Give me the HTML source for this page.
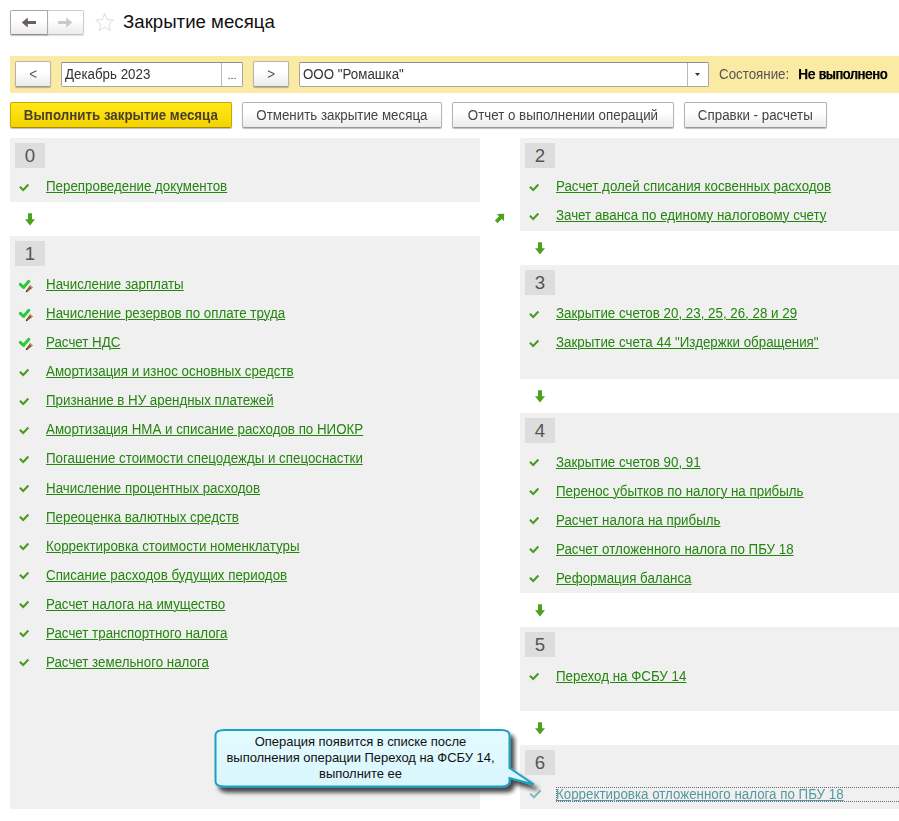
<!DOCTYPE html>
<html><head><meta charset="utf-8"><title>Закрытие месяца</title>
<style>
html,body{margin:0;padding:0;background:#fff;}
body{width:899px;height:821px;position:relative;overflow:hidden;font-family:"Liberation Sans",sans-serif;font-size:13.33px;color:#333;}
.abs,.pn,.nm,.ck,.lk,.btn,.inp{position:absolute;box-sizing:border-box;}
.pn{background:#f0f0f0;}
.nm{width:30px;height:25px;background:#dddddd;color:#555;font-size:18.67px;line-height:26px;text-align:center;}
.lk{color:#24850f;text-decoration:underline;text-decoration-thickness:1px;text-underline-offset:1px;white-space:nowrap;line-height:16px;height:16px;font-size:14px;transform:scaleX(0.9524);transform-origin:0 0;}
.t{display:inline-block;font-size:14px;transform:scaleX(0.9524);transform-origin:0 50%;white-space:nowrap;}
.t.c{transform-origin:50% 50%;}
.btn{height:26px;border:1px solid #b4b4b4;border-bottom-color:#9a9a9a;border-radius:2px;background:linear-gradient(#ffffff 40%,#ebebeb);box-shadow:0 1px 1px rgba(0,0,0,.25);color:#444;text-align:center;line-height:25px;white-space:nowrap;}
.inp{height:25px;border:1px solid #a6a6a6;border-top-color:#8e8e8e;border-radius:2px;background:#fff;color:#333;line-height:23px;padding-left:3px;white-space:nowrap;}
</style></head><body>
<!-- header -->
<div class="btn" style="left:47px;top:10px;width:37px;height:25px;border-color:#cdcdcd;border-bottom-color:#c0c0c0;border-radius:0 2px 2px 0;box-shadow:0 1px 1px rgba(0,0,0,.12)"></div>
<div class="btn" style="left:10px;top:10px;width:38px;height:25px;border-color:#a9a9a9;border-bottom-color:#8f8f8f;border-radius:2px 0 0 2px;"></div>
<svg class="abs" style="left:21px;top:17px" width="16" height="11" viewBox="0 0 16 11"><path d="M0.8 5.5 L6.8 0.6 V4.1 H15 V6.9 H6.8 V10.4 Z" fill="#6a5f5f"/></svg>
<svg class="abs" style="left:57px;top:17px" width="16" height="11" viewBox="0 0 16 11"><path d="M15.2 5.5 L9.2 0.6 V4.1 H1 V6.9 H9.2 V10.4 Z" fill="#c9c9c9"/></svg>
<svg class="abs" style="left:95px;top:12px" width="20" height="20" viewBox="0 0 20 20"><path d="M9.7 1.6 L12.2 7.6 L18.6 8.1 L13.7 12.3 L15.2 18.6 L9.7 15.2 L4.2 18.6 L5.7 12.3 L0.8 8.1 L7.2 7.6 Z" fill="#fff" stroke="#dcdcdc" stroke-width="1"/></svg>
<div class="abs" style="left:123px;top:10px;font-size:18.67px;line-height:23px;color:#111;white-space:nowrap">Закрытие месяца</div>
<!-- yellow band -->
<div class="abs" style="left:10px;top:56px;width:889px;height:37px;background:#fbeaa3"></div>
<div class="btn" style="left:15px;top:61px;width:36px;height:26px;line-height:24px;color:#555"><span class="t c">&lt;</span></div>
<div class="inp" style="left:61px;top:62px;width:182px;"><span class="t">Декабрь 2023</span></div>
<div class="abs" style="left:221px;top:63px;width:1px;height:23px;background:#b8b8b8"></div>
<div class="abs" style="left:222px;top:64px;width:20px;height:22px;line-height:22px;text-align:center;font-size:11px;color:#333">...</div>
<div class="btn" style="left:253px;top:61px;width:36px;height:26px;line-height:24px;color:#555"><span class="t c">&gt;</span></div>
<div class="inp" style="left:299px;top:62px;width:410px;"><span class="t">ООО "Ромашка"</span></div>
<div class="abs" style="left:687px;top:63px;width:1px;height:23px;background:#b8b8b8"></div>
<svg class="abs" style="left:695px;top:73px" width="5" height="3" viewBox="0 0 5 3"><path d="M0 0 H5 L2.5 3 Z" fill="#333"/></svg>
<div class="abs" style="left:719px;top:66px;line-height:16px;color:#555;white-space:nowrap"><span class="t">Состояние:</span></div>
<div class="abs" style="left:798px;top:66px;line-height:16px;color:#000;white-space:nowrap;"><span class="t" style="text-shadow:0.75px 0 0 #000;-webkit-text-stroke:0.25px #000">Не выполнено</span></div>
<!-- command bar -->
<div class="btn" style="left:10px;top:102px;width:222px;background:linear-gradient(#ffe818,#f3d400);border-color:#c7a900;border-bottom-color:#a88f00;color:#4a4025;font-weight:bold;"><span class="t c">Выполнить закрытие месяца</span></div>
<div class="btn" style="left:242px;top:102px;width:200px;"><span class="t c">Отменить закрытие месяца</span></div>
<div class="btn" style="left:452px;top:102px;width:222px;"><span class="t c">Отчет о выполнении операций</span></div>
<div class="btn" style="left:684px;top:102px;width:143px;"><span class="t c">Справки - расчеты</span></div>
<!-- panels -->
<div class="pn" style="left:10px;top:138px;width:470px;height:64px"></div>
<div class="nm" style="left:15px;top:143px">0</div>
<svg class="ck" style="left:18px;top:183px" width="12" height="10" viewBox="0 0 12 10"><path d="M1.9 3.7 L5.2 6.9 L10.4 1.6" fill="none" stroke="#4a9a1e" stroke-width="2.1" stroke-linecap="butt" stroke-linejoin="miter"/></svg>
<a class="lk" style="left:46px;top:178px">Перепроведение документов</a>
<div class="pn" style="left:10px;top:236px;width:470px;height:573px"></div>
<div class="nm" style="left:15px;top:241px">1</div>
<svg class="ck" style="left:18px;top:278px" width="17" height="15" viewBox="0 0 17 15"><path d="M2.3 6.4 L5.6 9.4 L10.8 3.3" fill="none" stroke="#28b834" stroke-width="2.9" stroke-linecap="round" stroke-linejoin="round"/><path d="M2.3 6.3 L5.6 9.3 L10.8 3.2" fill="none" stroke="#1fdc30" stroke-width="1.5" stroke-linecap="round" stroke-linejoin="round"/><path d="M12.2 7.0 L14.9 9.4 L9.7 13.5 L7.8 14.2 L8.4 12.2 Z" fill="#8a573a"/><path d="M12.2 7.0 L14.9 9.4 L13.9 10.2 L11.4 8.0 Z" fill="#d2a071"/><path d="M8.4 12.2 L9.7 13.5 L7.8 14.2 Z" fill="#3f261b"/></svg>
<a class="lk" style="left:46px;top:276px">Начисление зарплаты</a>
<svg class="ck" style="left:18px;top:307px" width="17" height="15" viewBox="0 0 17 15"><path d="M2.3 6.4 L5.6 9.4 L10.8 3.3" fill="none" stroke="#28b834" stroke-width="2.9" stroke-linecap="round" stroke-linejoin="round"/><path d="M2.3 6.3 L5.6 9.3 L10.8 3.2" fill="none" stroke="#1fdc30" stroke-width="1.5" stroke-linecap="round" stroke-linejoin="round"/><path d="M12.2 7.0 L14.9 9.4 L9.7 13.5 L7.8 14.2 L8.4 12.2 Z" fill="#8a573a"/><path d="M12.2 7.0 L14.9 9.4 L13.9 10.2 L11.4 8.0 Z" fill="#d2a071"/><path d="M8.4 12.2 L9.7 13.5 L7.8 14.2 Z" fill="#3f261b"/></svg>
<a class="lk" style="left:46px;top:305px">Начисление резервов по оплате труда</a>
<svg class="ck" style="left:18px;top:336px" width="17" height="15" viewBox="0 0 17 15"><path d="M2.3 6.4 L5.6 9.4 L10.8 3.3" fill="none" stroke="#28b834" stroke-width="2.9" stroke-linecap="round" stroke-linejoin="round"/><path d="M2.3 6.3 L5.6 9.3 L10.8 3.2" fill="none" stroke="#1fdc30" stroke-width="1.5" stroke-linecap="round" stroke-linejoin="round"/><path d="M12.2 7.0 L14.9 9.4 L9.7 13.5 L7.8 14.2 L8.4 12.2 Z" fill="#8a573a"/><path d="M12.2 7.0 L14.9 9.4 L13.9 10.2 L11.4 8.0 Z" fill="#d2a071"/><path d="M8.4 12.2 L9.7 13.5 L7.8 14.2 Z" fill="#3f261b"/></svg>
<a class="lk" style="left:46px;top:334px">Расчет НДС</a>
<svg class="ck" style="left:18px;top:368px" width="12" height="10" viewBox="0 0 12 10"><path d="M1.9 3.7 L5.2 6.9 L10.4 1.6" fill="none" stroke="#4a9a1e" stroke-width="2.1" stroke-linecap="butt" stroke-linejoin="miter"/></svg>
<a class="lk" style="left:46px;top:363px">Амортизация и износ основных средств</a>
<svg class="ck" style="left:18px;top:397px" width="12" height="10" viewBox="0 0 12 10"><path d="M1.9 3.7 L5.2 6.9 L10.4 1.6" fill="none" stroke="#4a9a1e" stroke-width="2.1" stroke-linecap="butt" stroke-linejoin="miter"/></svg>
<a class="lk" style="left:46px;top:392px">Признание в НУ арендных платежей</a>
<svg class="ck" style="left:18px;top:426px" width="12" height="10" viewBox="0 0 12 10"><path d="M1.9 3.7 L5.2 6.9 L10.4 1.6" fill="none" stroke="#4a9a1e" stroke-width="2.1" stroke-linecap="butt" stroke-linejoin="miter"/></svg>
<a class="lk" style="left:46px;top:421px">Амортизация НМА и списание расходов по НИОКР</a>
<svg class="ck" style="left:18px;top:455px" width="12" height="10" viewBox="0 0 12 10"><path d="M1.9 3.7 L5.2 6.9 L10.4 1.6" fill="none" stroke="#4a9a1e" stroke-width="2.1" stroke-linecap="butt" stroke-linejoin="miter"/></svg>
<a class="lk" style="left:46px;top:450px">Погашение стоимости спецодежды и спецоснастки</a>
<svg class="ck" style="left:18px;top:484px" width="12" height="10" viewBox="0 0 12 10"><path d="M1.9 3.7 L5.2 6.9 L10.4 1.6" fill="none" stroke="#4a9a1e" stroke-width="2.1" stroke-linecap="butt" stroke-linejoin="miter"/></svg>
<a class="lk" style="left:46px;top:480px">Начисление процентных расходов</a>
<svg class="ck" style="left:18px;top:513px" width="12" height="10" viewBox="0 0 12 10"><path d="M1.9 3.7 L5.2 6.9 L10.4 1.6" fill="none" stroke="#4a9a1e" stroke-width="2.1" stroke-linecap="butt" stroke-linejoin="miter"/></svg>
<a class="lk" style="left:46px;top:509px">Переоценка валютных средств</a>
<svg class="ck" style="left:18px;top:542px" width="12" height="10" viewBox="0 0 12 10"><path d="M1.9 3.7 L5.2 6.9 L10.4 1.6" fill="none" stroke="#4a9a1e" stroke-width="2.1" stroke-linecap="butt" stroke-linejoin="miter"/></svg>
<a class="lk" style="left:46px;top:538px">Корректировка стоимости номенклатуры</a>
<svg class="ck" style="left:18px;top:571px" width="12" height="10" viewBox="0 0 12 10"><path d="M1.9 3.7 L5.2 6.9 L10.4 1.6" fill="none" stroke="#4a9a1e" stroke-width="2.1" stroke-linecap="butt" stroke-linejoin="miter"/></svg>
<a class="lk" style="left:46px;top:567px">Списание расходов будущих периодов</a>
<svg class="ck" style="left:18px;top:600px" width="12" height="10" viewBox="0 0 12 10"><path d="M1.9 3.7 L5.2 6.9 L10.4 1.6" fill="none" stroke="#4a9a1e" stroke-width="2.1" stroke-linecap="butt" stroke-linejoin="miter"/></svg>
<a class="lk" style="left:46px;top:596px">Расчет налога на имущество</a>
<svg class="ck" style="left:18px;top:629px" width="12" height="10" viewBox="0 0 12 10"><path d="M1.9 3.7 L5.2 6.9 L10.4 1.6" fill="none" stroke="#4a9a1e" stroke-width="2.1" stroke-linecap="butt" stroke-linejoin="miter"/></svg>
<a class="lk" style="left:46px;top:625px">Расчет транспортного налога</a>
<svg class="ck" style="left:18px;top:658px" width="12" height="10" viewBox="0 0 12 10"><path d="M1.9 3.7 L5.2 6.9 L10.4 1.6" fill="none" stroke="#4a9a1e" stroke-width="2.1" stroke-linecap="butt" stroke-linejoin="miter"/></svg>
<a class="lk" style="left:46px;top:654px">Расчет земельного налога</a>
<div class="pn" style="left:520px;top:138px;width:379px;height:93px"></div>
<div class="nm" style="left:525px;top:143px">2</div>
<svg class="ck" style="left:528px;top:183px" width="12" height="10" viewBox="0 0 12 10"><path d="M1.9 3.7 L5.2 6.9 L10.4 1.6" fill="none" stroke="#4a9a1e" stroke-width="2.1" stroke-linecap="butt" stroke-linejoin="miter"/></svg>
<a class="lk" style="left:556px;top:178px">Расчет долей списания косвенных расходов</a>
<svg class="ck" style="left:528px;top:212px" width="12" height="10" viewBox="0 0 12 10"><path d="M1.9 3.7 L5.2 6.9 L10.4 1.6" fill="none" stroke="#4a9a1e" stroke-width="2.1" stroke-linecap="butt" stroke-linejoin="miter"/></svg>
<a class="lk" style="left:556px;top:207px">Зачет аванса по единому налоговому счету</a>
<div class="pn" style="left:520px;top:265px;width:379px;height:114px"></div>
<div class="nm" style="left:525px;top:270px">3</div>
<svg class="ck" style="left:528px;top:310px" width="12" height="10" viewBox="0 0 12 10"><path d="M1.9 3.7 L5.2 6.9 L10.4 1.6" fill="none" stroke="#4a9a1e" stroke-width="2.1" stroke-linecap="butt" stroke-linejoin="miter"/></svg>
<a class="lk" style="left:556px;top:305px">Закрытие счетов 20, 23, 25, 26, 28 и 29</a>
<svg class="ck" style="left:528px;top:339px" width="12" height="10" viewBox="0 0 12 10"><path d="M1.9 3.7 L5.2 6.9 L10.4 1.6" fill="none" stroke="#4a9a1e" stroke-width="2.1" stroke-linecap="butt" stroke-linejoin="miter"/></svg>
<a class="lk" style="left:556px;top:334px">Закрытие счета 44 "Издержки обращения"</a>
<div class="pn" style="left:520px;top:413px;width:379px;height:180px"></div>
<div class="nm" style="left:525px;top:418px">4</div>
<svg class="ck" style="left:528px;top:458px" width="12" height="10" viewBox="0 0 12 10"><path d="M1.9 3.7 L5.2 6.9 L10.4 1.6" fill="none" stroke="#4a9a1e" stroke-width="2.1" stroke-linecap="butt" stroke-linejoin="miter"/></svg>
<a class="lk" style="left:556px;top:454px">Закрытие счетов 90, 91</a>
<svg class="ck" style="left:528px;top:487px" width="12" height="10" viewBox="0 0 12 10"><path d="M1.9 3.7 L5.2 6.9 L10.4 1.6" fill="none" stroke="#4a9a1e" stroke-width="2.1" stroke-linecap="butt" stroke-linejoin="miter"/></svg>
<a class="lk" style="left:556px;top:483px">Перенос убытков по налогу на прибыль</a>
<svg class="ck" style="left:528px;top:516px" width="12" height="10" viewBox="0 0 12 10"><path d="M1.9 3.7 L5.2 6.9 L10.4 1.6" fill="none" stroke="#4a9a1e" stroke-width="2.1" stroke-linecap="butt" stroke-linejoin="miter"/></svg>
<a class="lk" style="left:556px;top:512px">Расчет налога на прибыль</a>
<svg class="ck" style="left:528px;top:545px" width="12" height="10" viewBox="0 0 12 10"><path d="M1.9 3.7 L5.2 6.9 L10.4 1.6" fill="none" stroke="#4a9a1e" stroke-width="2.1" stroke-linecap="butt" stroke-linejoin="miter"/></svg>
<a class="lk" style="left:556px;top:541px">Расчет отложенного налога по ПБУ 18</a>
<svg class="ck" style="left:528px;top:574px" width="12" height="10" viewBox="0 0 12 10"><path d="M1.9 3.7 L5.2 6.9 L10.4 1.6" fill="none" stroke="#4a9a1e" stroke-width="2.1" stroke-linecap="butt" stroke-linejoin="miter"/></svg>
<a class="lk" style="left:556px;top:570px">Реформация баланса</a>
<div class="pn" style="left:520px;top:627px;width:379px;height:84px"></div>
<div class="nm" style="left:525px;top:632px">5</div>
<svg class="ck" style="left:528px;top:672px" width="12" height="10" viewBox="0 0 12 10"><path d="M1.9 3.7 L5.2 6.9 L10.4 1.6" fill="none" stroke="#4a9a1e" stroke-width="2.1" stroke-linecap="butt" stroke-linejoin="miter"/></svg>
<a class="lk" style="left:556px;top:668px">Переход на ФСБУ 14</a>
<div class="pn" style="left:520px;top:745px;width:379px;height:64px"></div>
<div class="nm" style="left:525px;top:750px">6</div>
<svg class="ck" style="left:529px;top:789px" width="13" height="10" viewBox="0 0 13 10"><path d="M1.3 4.6 L5 8.3 L11.7 1.4" fill="none" stroke="#7fbcb5" stroke-width="2" stroke-linecap="butt"/></svg>
<div class="abs" style="left:556px;top:787px;width:343px;height:15px;border:1px dotted #6a6a6a;border-right:none"></div>
<a class="lk" style="left:556px;top:786px;color:#5499a0">Корректировка отложенного налога по ПБУ 18</a>
<svg class="ck" style="left:25px;top:213px" width="10" height="13" viewBox="0 0 10 13"><path d="M3 0.2 H7 V6.2 H10 L5 12.4 L0 6.2 H3 Z" fill="#4aa21f"/></svg>
<svg class="ck" style="left:535px;top:242px" width="10" height="13" viewBox="0 0 10 13"><path d="M3 0.2 H7 V6.2 H10 L5 12.4 L0 6.2 H3 Z" fill="#4aa21f"/></svg>
<svg class="ck" style="left:535px;top:390px" width="10" height="13" viewBox="0 0 10 13"><path d="M3 0.2 H7 V6.2 H10 L5 12.4 L0 6.2 H3 Z" fill="#4aa21f"/></svg>
<svg class="ck" style="left:535px;top:604px" width="10" height="13" viewBox="0 0 10 13"><path d="M3 0.2 H7 V6.2 H10 L5 12.4 L0 6.2 H3 Z" fill="#4aa21f"/></svg>
<svg class="ck" style="left:535px;top:722px" width="10" height="13" viewBox="0 0 10 13"><path d="M3 0.2 H7 V6.2 H10 L5 12.4 L0 6.2 H3 Z" fill="#4aa21f"/></svg>
<svg class="abs" style="left:494px;top:213px" width="11" height="11" viewBox="0 0 11 11"><path d="M2.8 1.0 L10.2 0.8 L9.9 8.1 L7.7 5.9 L3.5 10.3 L0.9 7.6 L5.0 3.2 Z" fill="#4aa21f"/></svg>
<!-- callout -->
<svg class="abs" style="left:205px;top:721px" width="345" height="90" viewBox="0 0 345 90">
<defs><linearGradient id="cg" x1="0" y1="0" x2="0" y2="1"><stop offset="0" stop-color="#e3fbff"/><stop offset="1" stop-color="#d9f6fd"/></linearGradient>
<filter id="sh" x="-10%" y="-10%" width="130%" height="150%"><feGaussianBlur in="SourceAlpha" stdDeviation="2.2"/><feOffset dx="4" dy="4.5"/><feComponentTransfer><feFuncA type="linear" slope="0.72"/></feComponentTransfer><feMerge><feMergeNode/><feMergeNode in="SourceGraphic"/></feMerge></filter></defs>
<path filter="url(#sh)" d="M20 9 H296 Q304.500 9 304.500 14 V47 L329 63.500 L304.500 57 V60.500 Q304.500 65.500 296 65.500 H20 Q10.500 65.500 10.500 60.500 V14 Q10.500 9 20 9 Z" fill="url(#cg)" stroke="#1f9fc2" stroke-width="2"/>
</svg>
<div class="abs" style="left:213px;top:734px;width:295px;text-align:center;font-size:13px;letter-spacing:-0.04px;line-height:16px;color:#111">Операция появится в списке после<br>выполнения операции Переход на ФСБУ 14,<br>выполните ее</div>
</body></html>
